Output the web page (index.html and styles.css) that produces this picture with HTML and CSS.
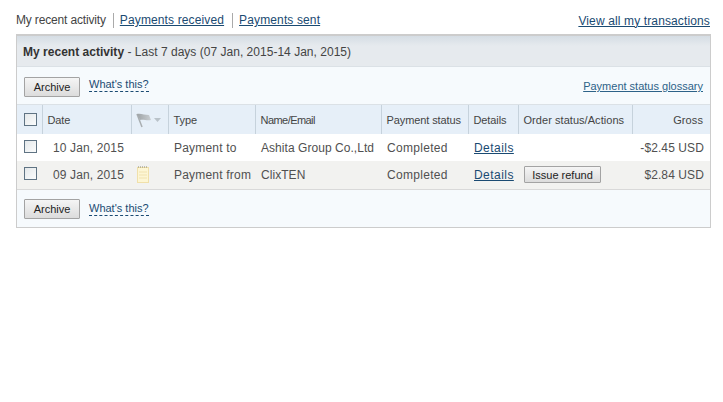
FILE: index.html
```html
<!DOCTYPE html>
<html lang="en">
<head>
    <meta charset="UTF-8">
    <meta name="viewport" content="width=device-width, initial-scale=1.0">
    <title>My recent activity</title>
    <link rel="stylesheet" href="styles.css">
</head>
<body>
    <div class="tabs">
        <ul class="tab-list">
            <li class="current">My recent activity</li>
            <li><a href="#">Payments received</a></li>
            <li><a href="#">Payments sent</a></li>
        </ul>
        <a href="#">View all my transactions</a>
    </div>
    <div class="panel">
        <div class="panel-title"><b>My recent activity</b> - Last 7 days (07 Jan, 2015-14 Jan, 2015)</div>
        <div class="toolbar">
            <button class="btn archive">Archive</button>
            <a href="#" class="help">What's this?</a>
            <a href="#" class="glossary">Payment status glossary</a>
        </div>
        <table>
            <colgroup>
                <col class="c-check"><col class="c-date"><col class="c-flag"><col class="c-type"><col class="c-name">
                <col class="c-status"><col class="c-details"><col class="c-order"><col class="c-gross">
            </colgroup>
            <thead>
                <tr>
                    <th><span class="check"></span></th>
                    <th>Date</th>
                    <th>
                        <svg class="flag" width="26" height="16" viewBox="0 0 26 16">
                            <defs>
                                <linearGradient id="flagFade">
                                    <stop offset="0" stop-color="#9ea3a6"/>
                                    <stop offset="1" stop-color="#c9ced2"/>
                                </linearGradient>
                            </defs>
                            <path d="M1 2 L6 15" stroke="#a9aeb1" stroke-width="1.500" fill="none"/>
                            <path d="M1 2 C5 1 8 3 13 3 L15 8 C11 9 7 7 4 8 Z" fill="url(#flagFade)"/>
                            <path d="M18 6 H25 L21.500 10 Z" fill="#b9c2c9"/>
                        </svg>
                    </th>
                    <th>Type</th>
                    <th class="name-head">Name/Email</th>
                    <th>Payment status</th>
                    <th>Details</th>
                    <th class="order-head">Order status/Actions</th>
                    <th class="num gross-head">Gross</th>
                </tr>
            </thead>
            <tbody>
                <tr>
                    <td><span class="check"></span></td>
                    <td class="date">10 Jan, 2015</td>
                    <td></td>
                    <td class="type">Payment to</td>
                    <td class="name">Ashita Group Co.,Ltd</td>
                    <td class="status">Completed</td>
                    <td class="link"><a href="#">Details</a></td>
                    <td></td>
                    <td class="num">-$2.45 USD</td>
                </tr>
                <tr class="alt">
                    <td><span class="check"></span></td>
                    <td class="date">09 Jan, 2015</td>
                    <td>
                        <svg class="note" width="14" height="17" viewBox="0 0 14 17">
                            <rect x="1.500" y="1.500" width="11" height="15" fill="#fdf6d4" stroke="#f0e0aa"/>
                            <path d="M2 1 H12" stroke="#8a8a7a" stroke-dasharray="1 1"/>
                            <path d="M3 6 H11 M3 9 H11 M3 12 H11" stroke="#f1e2b0"/>
                        </svg>
                    </td>
                    <td class="type">Payment from</td>
                    <td class="name">ClixTEN</td>
                    <td class="status">Completed</td>
                    <td class="link"><a href="#">Details</a></td>
                    <td><button class="btn refund">Issue refund</button></td>
                    <td class="num">$2.84 USD</td>
                </tr>
            </tbody>
        </table>
        <div class="toolbar bottom">
            <button class="btn archive">Archive</button>
            <a href="#" class="help">What's this?</a>
        </div>
    </div>
</body>
</html>
```

FILE: styles.css
```css
*{
    box-sizing: border-box;
    padding: 0;
    margin: 0;
}
body{
    background-color: white;
    font-family: "Liberation Sans", Arial, sans-serif;
    font-size: 12px;
    color: #444;
    padding: 13px 12px 0 16px;
}
a{
    color: #1a4a72;
}
.tabs{
    display: flex;
    justify-content: space-between;
    align-items: center;
    height: 15px;
    margin-bottom: 6px;
    padding-right: 1px;
    letter-spacing: 0.13px;
}
.tab-list{
    display: flex;
    list-style: none;
}
.tab-list li{
    padding: 0 8px 0 6px;
    border-left: 1px solid #aaa;
    line-height: 15px;
}
.tab-list li.current{
    padding: 0 7px 0 0;
    border-left: none;
    letter-spacing: -0.16px;
}
.panel{
    width: 695px;
    height: 194px;
    border: 1px solid #ccc;
    border-top-width: 2px;
    background-color: #f6fafd;
}
.panel-title{
    height: 31px;
    line-height: 32px;
    padding-left: 6px;
    letter-spacing: 0.02px;
    background: linear-gradient(#d5dde4, #e6eaee 10px);
    border-bottom: 1px solid #dbe1e6;
}
.panel-title b{
    color: #333;
}
.toolbar{
    display: flex;
    align-items: flex-start;
    height: 38px;
    padding: 10px 7px 0;
    border-bottom: 1px solid #dbe1e6;
}
.toolbar.bottom{
    height: 36px;
    padding-top: 9px;
    border-bottom: none;
}
.btn{
    font-family: inherit;
    font-size: 11px;
    color: #222;
    border: 1px solid #a3a3a3;
    border-radius: 1px;
    background: linear-gradient(#f5f5f5, #dcdcdc);
}
.archive{
    width: 56px;
    height: 20px;
}
.refund{
    display: block;
    width: 77px;
    height: 17px;
    margin-left: 1px;
}
.help{
    margin-left: 9px;
    color: #1a4a72;
    font-size: 11px;
    text-decoration: none;
    border-bottom: 1px dashed #1a4a72;
    line-height: 14px;
}
.toolbar.bottom .help{
    margin-top: 2px;
}
.glossary{
    margin-left: auto;
    margin-top: 3px;
    font-size: 11px;
    color: #2d6288;
}
table{
    width: 693px;
    table-layout: fixed;
    border-collapse: collapse;
}
.c-check{ width: 25px; }
.c-date{ width: 89px; }
.c-flag{ width: 37px; }
.c-type{ width: 87px; }
.c-name{ width: 126px; }
.c-status{ width: 87px; }
.c-details{ width: 50px; }
.c-order{ width: 114px; }
.c-gross{ width: 78px; }
thead tr{
    height: 29px;
    background-color: #e6eff8;
}
th{
    font-size: 11px;
    font-weight: normal;
    text-align: left;
    padding: 0 5px;
    color: #444;
    letter-spacing: -0.1px;
    border-right: 1px solid #c6d2dc;
    background-clip: padding-box;
}
th.name-head{
    letter-spacing: -0.55px;
}
th.order-head{
    letter-spacing: 0.05px;
}
th.gross-head{
    padding-right: 7px;
    letter-spacing: 0.1px;
}
th:last-child{
    border-right: none;
}
tbody tr{
    height: 27px;
    background-color: white;
}
tbody tr.alt{
    height: 28px;
    background-color: #f2f2f0;
    border-bottom: 1px solid #d9d9d9;
}
td{
    padding: 0 5px;
    color: #505050;
    letter-spacing: 0.3px;
    white-space: nowrap;
}
td.date{
    padding-left: 11px;
    letter-spacing: 0.13px;
}
td.type{
    padding-left: 6px;
    letter-spacing: 0.2px;
}
td.name{
    padding-left: 6px;
    letter-spacing: 0.05px;
}
td.status{
    padding-left: 6px;
}
td.link{
    padding-left: 6px;
    letter-spacing: 0.45px;
}
td.num{
    letter-spacing: 0.1px;
}
.num{
    text-align: right;
    padding-right: 6px;
}
.check{
    display: block;
    width: 13px;
    height: 13px;
    margin: 0 0 3px 2px;
    border: 1px solid #5f7383;
    background: linear-gradient(135deg, #e4e8ea, #fbfcfc);
}
th .check{
    margin-bottom: 0;
}
.flag, .note{
    display: block;
}
.flag{
    margin-left: -1px;
}
```
